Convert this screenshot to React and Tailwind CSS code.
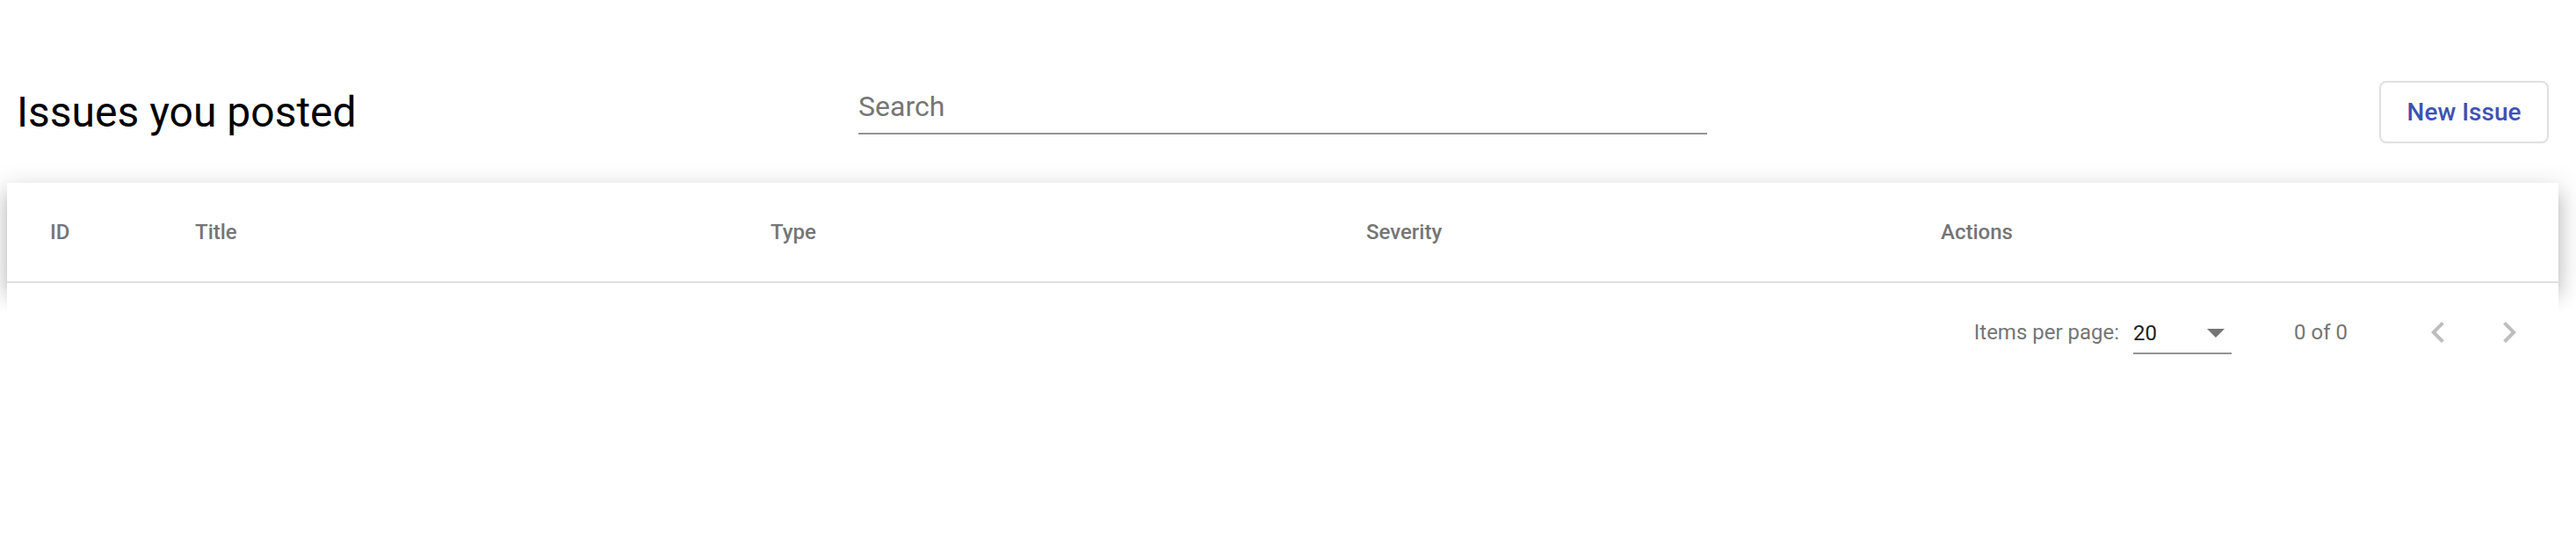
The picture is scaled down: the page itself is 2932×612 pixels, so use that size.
import React from 'react';

const columns = [
  { label: 'ID', width: 'w-[165px]' },
  { label: 'Title', width: 'w-[655px]' },
  { label: 'Type', width: 'w-[678px]' },
  { label: 'Severity', width: 'w-[654px]' },
  { label: 'Actions', width: 'flex-1' },
];

const ChevronLeft = () => (
  <svg width="48" height="48" viewBox="0 0 24 24" fill="#bdbdbd">
    <path d="M15.41 7.41L14 6l-6 6 6 6 1.41-1.41L10.83 12z" />
  </svg>
);

const ChevronRight = () => (
  <svg width="48" height="48" viewBox="0 0 24 24" fill="#bdbdbd">
    <path d="M10 6L8.59 7.41 13.17 12l-4.58 4.59L10 18l6-6z" />
  </svg>
);

const App = () => {
  return (
    <div className="min-h-[612px] bg-white pt-[92px] font-['Roboto',sans-serif]">
      {/* Toolbar */}
      <div className="flex h-[71px] items-center pl-[19px] pr-[31px]">
        <div className="w-[958px]">
          <h1 className="text-[48px] leading-none font-normal text-black">Issues you posted</h1>
        </div>
        <div className="w-[966px] border-b-2 border-[#949494] pb-[11px]">
          <input
            className="w-full bg-transparent text-[32px] leading-[38px] text-[#212121] placeholder-[#757575] outline-none"
            placeholder="Search"
          />
        </div>
        <div className="flex flex-1 justify-end">
          <button className="h-[71px] w-[193px] rounded-[8px] border-2 border-[#e0e0e0] bg-white text-[28px] font-medium text-[#3f51b5]">
            New Issue
          </button>
        </div>
      </div>

      {/* Table card */}
      <div className="mt-[45px] ml-[8px] mr-[20px]">
        <div className="bg-white shadow-[0_10px_10px_-6px_rgba(0,0,0,0.2),0_16px_20px_2px_rgba(0,0,0,0.14),0_6px_28px_4px_rgba(0,0,0,0.12)]">
          <div className="flex h-[114px] items-center border-b-2 border-[#e0e0e0] pl-[49px]">
            {columns.map((col) => (
              <div key={col.label} className={`${col.width} text-[24px] font-medium text-[#757575]`}>
                {col.label}
              </div>
            ))}
          </div>
        </div>

        {/* Paginator */}
        <div className="relative flex h-[112px] items-center justify-end bg-white pr-[16px] text-[24px] text-[#757575]">
          <span>Items per page:</span>
          <div className="ml-[16px] flex h-[50px] w-[112px] items-center border-b-2 border-[#949494] pt-[4px]">
            <span className="flex-1 text-[#212121]">20</span>
            <span className="mr-[8px] h-0 w-0 border-l-[10px] border-r-[10px] border-t-[10px] border-l-transparent border-r-transparent border-t-[#757575]" />
          </div>
          <span className="ml-[71px]">0 of 0</span>
          <button className="ml-[63px] flex h-[80px] w-[80px] items-center justify-center">
            <ChevronLeft />
          </button>
          <button className="ml-[1px] flex h-[80px] w-[80px] items-center justify-center">
            <ChevronRight />
          </button>
        </div>
      </div>
    </div>
  );
};

export default App;
